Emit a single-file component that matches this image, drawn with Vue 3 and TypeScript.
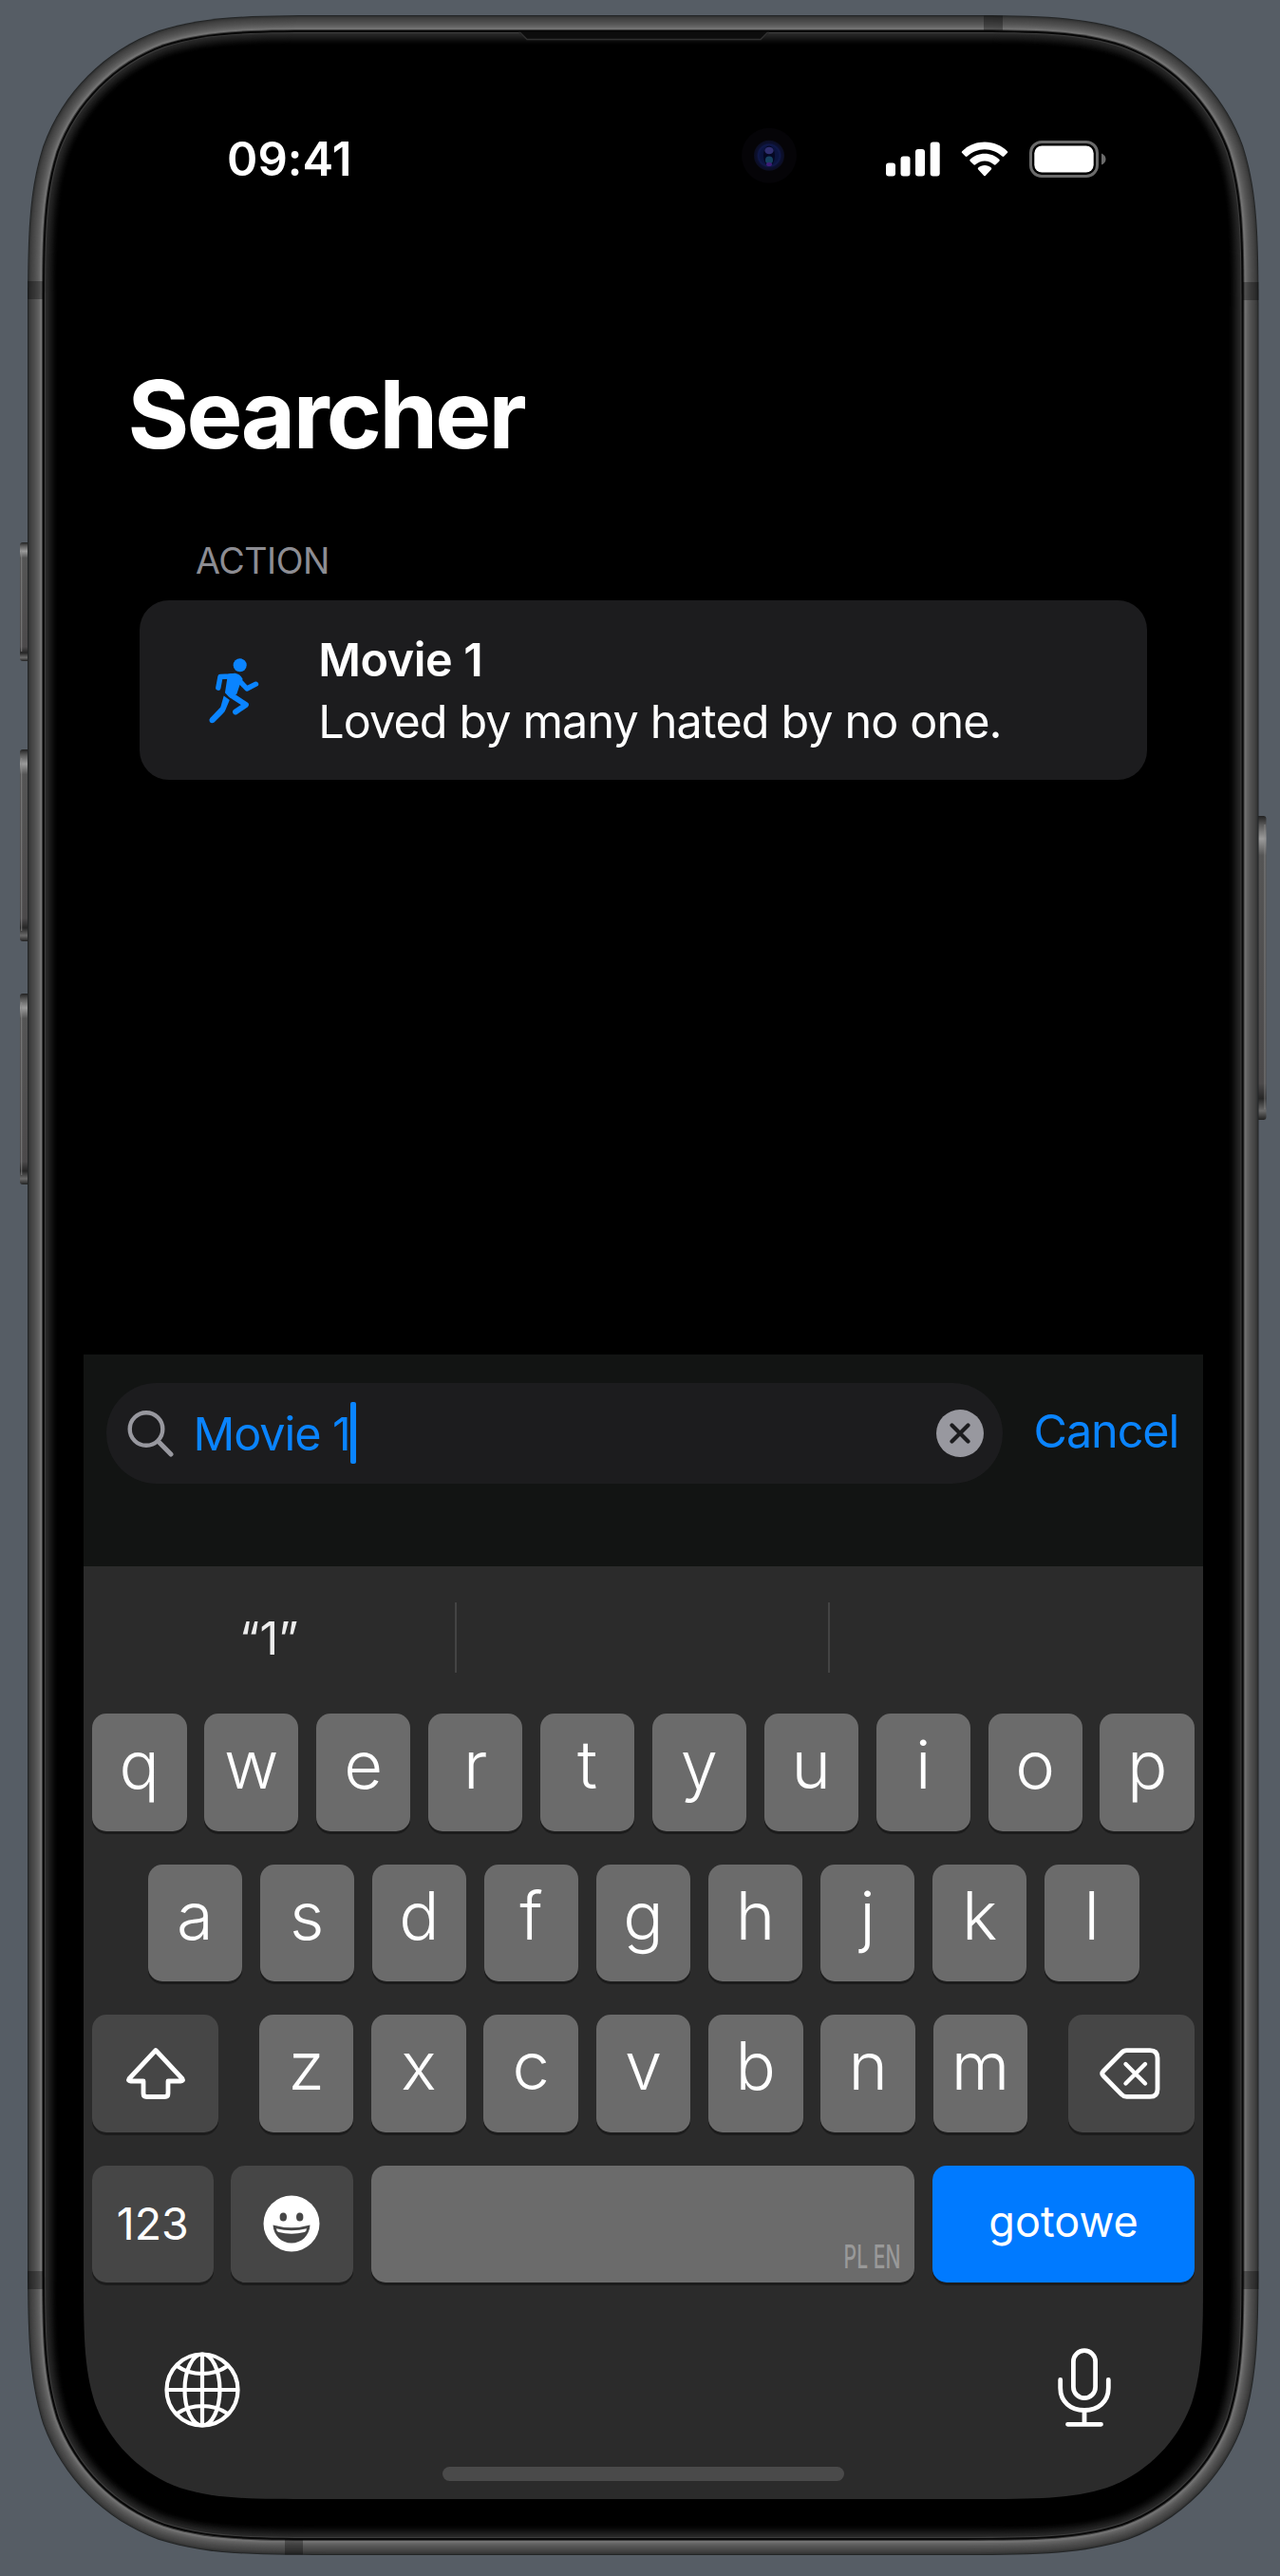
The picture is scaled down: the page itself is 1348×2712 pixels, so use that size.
<script setup lang="ts">
interface Layer {
  d: string
  fill: string
}

// Rounded rectangle with continuous (superelliptic) corners
function squircle(x: number, y: number, w: number, h: number, r: number): string {
  const a = 1.52866 * r
  const b = 1.08849 * r
  const c = 0.86841 * r
  const d = 0.63149 * r
  const e = 0.07491 * r
  const f = 0.37282 * r
  const g = 0.16906 * r
  const R = x + w
  const B = y + h
  return [
    `M${x + a} ${y}`,
    `L${R - a} ${y}`,
    `C${R - b} ${y} ${R - c} ${y} ${R - d} ${y + e}`,
    `C${R - f} ${y + g} ${R - g} ${y + f} ${R - e} ${y + d}`,
    `C${R} ${y + c} ${R} ${y + b} ${R} ${y + a}`,
    `L${R} ${B - a}`,
    `C${R} ${B - b} ${R} ${B - c} ${R - e} ${B - d}`,
    `C${R - g} ${B - f} ${R - f} ${B - g} ${R - d} ${B - e}`,
    `C${R - c} ${B} ${R - b} ${B} ${R - a} ${B}`,
    `L${x + a} ${B}`,
    `C${x + b} ${B} ${x + c} ${B} ${x + d} ${B - e}`,
    `C${x + f} ${B - g} ${x + g} ${B - f} ${x + e} ${B - d}`,
    `C${x} ${B - c} ${x} ${B - b} ${x} ${B - a}`,
    `L${x} ${y + a}`,
    `C${x} ${y + b} ${x} ${y + c} ${x + e} ${y + d}`,
    `C${x + g} ${y + f} ${x + f} ${y + g} ${x + d} ${y + e}`,
    `C${x + c} ${y} ${x + b} ${y} ${x + a} ${y}Z`,
  ].join('')
}

// Metal rim, seam and glass edge, from the outside in, one pixel per step
const rim = [
  '#232526', '#333434', '#3b3b3b', '#404040', '#444444', '#484848', '#4b4b4b', '#4f4f4f',
  '#535353', '#575757', '#5c5c5c', '#616161', '#676767', '#717171', '#737373', '#3a3a3a',
  '#060606', '#0a0a0a', '#3c3c3c', '#292929', '#252525', '#222222', '#1e1e1e', '#1a1a1a',
  '#161616', '#121212', '#0e0e0e', '#0a0a0a', '#070707', '#040404', '#020202', '#000000',
]

const layers: Layer[] = rim.map((fill, i) => ({
  d: squircle(29 + i, 16 + i, 1296.5 - 2 * i, 2674 - 2 * i, 218 - i),
  fill,
}))

const screenClip = { clipPath: `path("${squircle(0, 0, 1179, 2556, 160)}")` }

const row1 = [...'qwertyuiop']
const row2 = [...'asdfghjkl']
const row3 = [...'zxcvbnm']
</script>

<template>
  <div class="page">
    <svg class="device" width="1348" height="2712" viewBox="0 0 1348 2712">
      <defs>
        <linearGradient id="btn" x1="0" y1="0" x2="0" y2="1">
          <stop offset="0" stop-color="#222" />
          <stop offset="0.03" stop-color="#5a5a5a" />
          <stop offset="0.075" stop-color="#9b9b9b" />
          <stop offset="0.13" stop-color="#555" />
          <stop offset="0.88" stop-color="#4c4a4b" />
          <stop offset="0.93" stop-color="#262626" />
          <stop offset="0.97" stop-color="#6a6a6a" />
          <stop offset="1" stop-color="#222" />
        </linearGradient>
        <radialGradient id="lens">
          <stop offset="0" stop-color="#0a1030" />
          <stop offset="0.6" stop-color="#0b1440" />
          <stop offset="0.72" stop-color="#10194a" />
          <stop offset="0.8" stop-color="#0c1030" />
          <stop offset="1" stop-color="#0b0d20" />
        </radialGradient>
      </defs>
      <g fill="url(#btn)">
        <rect x="21" y="571" width="14" height="125" rx="3" />
        <rect x="21" y="789" width="14" height="202" rx="3" />
        <rect x="21" y="1046" width="14" height="201" rx="3" />
        <rect x="1320" y="859" width="13.5" height="320" rx="3" />
      </g>
      <g fill="#8b8b8b" opacity="0.6">
        <rect x="22" y="580" width="1.3" height="106" />
        <rect x="22" y="798" width="1.3" height="182" />
        <rect x="22" y="1055" width="1.3" height="182" />
        <rect x="1331.3" y="868" width="1.3" height="300" />
      </g>
      <path v-for="(layer, i) in layers" :key="i" :d="layer.d" :fill="layer.fill" />
      <g fill="#000" fill-opacity="0.3">
        <rect x="29" y="296" width="17" height="19" />
        <rect x="1309" y="297" width="16.5" height="19" />
        <rect x="1036" y="16.500" width="20" height="15.500" />
        <rect x="300" y="2673" width="19" height="16.500" />
        <rect x="29" y="2391" width="17" height="19" />
        <rect x="1309" y="2391" width="16.5" height="19" />
      </g>
      <path d="M546 34 L555 41.5 H801 L810 34Z" fill="#0d0d0d" />
      <path d="M546 34.5 L548 34.5 L555 41.5 H801 L808 34.5 L810 34.5" fill="none" stroke="#303030" stroke-width="1.4" />
      <circle cx="810" cy="163.7" r="29" fill="#050407" />
      <circle cx="810" cy="163.7" r="16" fill="url(#lens)" />
      <ellipse cx="810" cy="164" rx="6" ry="10.5" fill="#050822" />
      <ellipse cx="810" cy="158.5" rx="4.6" ry="3.8" fill="#302f70" />
      <ellipse cx="810" cy="168.5" rx="4" ry="4" fill="#15405f" />
      <ellipse cx="810" cy="173" rx="3" ry="2" fill="#3f1d78" />
    </svg>

    <main class="screen" :style="screenClip">
      <header class="status">
        <time class="time">09:41</time>
        <div class="indicators">
          <svg width="57" height="37" viewBox="0 0 57 37" fill="#fff">
            <rect x="0" y="22.5" width="10" height="14" rx="3" />
            <rect x="15.5" y="15.5" width="10" height="21" rx="3" />
            <rect x="31" y="8" width="10" height="28.500" rx="3" />
            <rect x="46.700" y="0.500" width="10" height="36" rx="3" />
          </svg>
          <svg width="50" height="37" viewBox="0 0 50 37" fill="#fff">
            <path d="M25 0.500C34.500 0.500 43 4.300 48.800 10.200Q49.700 11.200 48.800 12.100L45.400 15.600Q44.400 16.500 43.400 15.600C38.500 11 32 8.200 25 8.200S11.500 11 6.600 15.600Q5.600 16.500 4.600 15.600L1.200 12.100Q0.300 11.200 1.200 10.200C7 4.300 15.500 0.500 25 0.500Z" />
            <path d="M25 12.700C31 12.700 36.300 15 40.300 18.700Q41.300 19.700 40.300 20.700L36.700 24.200Q35.700 25.100 34.700 24.200C32 21.900 28.700 20.400 25 20.400S18 21.900 15.300 24.200Q14.300 25.100 13.300 24.200L9.700 20.700Q8.700 19.700 9.700 18.700C13.700 15 19 12.700 25 12.700Z" />
            <path d="M25 25C27.600 25 30 25.900 31.800 27.400Q32.800 28.300 31.800 29.400L26 35.800Q25 36.900 24 35.800L18.200 29.400Q17.200 28.300 18.200 27.400C20 25.900 22.400 25 25 25Z" />
          </svg>
          <svg width="81" height="39" viewBox="0 0 81 39">
            <rect x="1.500" y="1.500" width="70" height="36" rx="11.500" fill="none" stroke="#6b6b6b" stroke-width="3" />
            <rect x="5.300" y="5.500" width="62.400" height="28" rx="8" fill="#fff" />
            <path d="M76 13.500Q80.500 15.500 80.500 19.500T76 25.500Z" fill="#6b6b6b" />
          </svg>
        </div>
      </header>

      <h1 class="title">Searcher</h1>

      <section class="results">
        <h2 class="section-label">ACTION</h2>
        <article class="card">
          <svg class="runner" width="60" height="76" viewBox="216 688 60 76" fill="none" stroke="#0a84ff" stroke-linecap="round" stroke-linejoin="round">
            <circle cx="252.700" cy="699.300" r="7" fill="#0a84ff" stroke="none" />
            <path d="M229.800 723.200L232 711.500L242 711Q248 710.500 251.500 715L260 724L269.500 719.200" stroke-width="5.400" />
            <path d="M241 709.500L247.500 708.800Q252 709.500 254.500 714L251.500 720L248.500 729L241.500 731.500L238 728L240.500 712Z" fill="#0a84ff" stroke-width="2" />
            <path d="M241.500 728Q242 730.500 246 732.500L259 741L248 748.500" stroke-width="5.800" />
            <path d="M235.700 731.500L241.800 736L237.500 746.300Q236.800 748.200 235 750L225.500 759.400Q223 761.200 220.900 759Q219.600 756.500 221.500 754.800L232.300 743.600Z" fill="#0a84ff" stroke="none" />
          </svg>
          <div class="card-text">
            <h3>Movie 1</h3>
            <p>Loved by many hated by no one.</p>
          </div>
        </article>
      </section>

      <section class="search-panel">
        <div class="search-field">
          <svg width="50" height="50" viewBox="0 0 50 50" fill="none" stroke="#98989f" stroke-linecap="round">
            <circle cx="20" cy="20.500" r="17.300" stroke-width="4.400" />
            <path d="M32.700 33.500L46 47" stroke-width="5" />
          </svg>
          <span class="query">Movie 1</span><span class="caret"></span>
          <svg class="clear" width="50" height="50" viewBox="0 0 50 50">
            <circle cx="25" cy="25" r="25" fill="#98989f" />
            <path d="M16.500 16.500L33.500 33.500M33.500 16.500L16.500 33.500" stroke="#1c1c1e" stroke-width="4.200" stroke-linecap="round" />
          </svg>
        </div>
        <button class="cancel" type="button">Cancel</button>
      </section>

      <section class="keyboard">
        <div class="suggestions">
          <span class="suggestion">“1”</span>
          <i></i>
          <span class="suggestion"></span>
          <i></i>
          <span class="suggestion last"></span>
        </div>
        <div class="rows">
          <div class="row">
            <button v-for="k in row1" :key="k" class="key" type="button">{{ k }}</button>
          </div>
          <div class="row inset">
            <button v-for="k in row2" :key="k" class="key" type="button">{{ k }}</button>
          </div>
          <div class="row">
            <button class="key dark shift" type="button">
              <svg width="64" height="56" viewBox="0 0 64 56" fill="none" stroke="#fff" stroke-width="4.800" stroke-linejoin="round">
                <path d="M32 3.500L60 33.500Q61.500 36 58.500 36H45V49Q45 52.500 41.500 52.500H22.500Q19 52.500 19 49V36H5.500Q2.500 36 4 33.500Z" />
              </svg>
            </button>
            <button v-for="k in row3" :key="k" class="key" type="button">{{ k }}</button>
            <button class="key dark backspace" type="button">
              <svg width="64" height="54" viewBox="0 0 64 54" fill="none" stroke="#fff" stroke-width="4.800" stroke-linecap="round" stroke-linejoin="round">
                <path d="M28.500 2.600H53Q61 2.600 61 10.600V43.400Q61 51.400 53 51.400H28.500Q25.500 51.400 23 48.800L4 29.500Q1.500 27 4 24.500L23 5.200Q25.500 2.600 28.500 2.600Z" />
                <path d="M27.500 17L48 37.500M48 17L27.500 37.500" stroke-width="4.400" />
              </svg>
            </button>
          </div>
          <div class="row">
            <button class="key dark numbers" type="button">123</button>
            <button class="key dark emoji" type="button">
              <svg width="60" height="60" viewBox="0 0 60 60">
                <circle cx="30" cy="30" r="29.500" fill="#fff" />
                <ellipse cx="21.300" cy="23" rx="3.700" ry="4.500" fill="#464646" />
                <ellipse cx="38.700" cy="23" rx="3.700" ry="4.500" fill="#464646" />
                <path d="M10.500 31.500Q30 37 49.500 31.500C49 42.500 40.500 50.500 30 50.500S11 42.500 10.500 31.500Z" fill="#464646" />
                <path d="M14 35.300Q30 39.300 46 35.300Q46 38 43.500 39Q30 42.300 16.500 39Q14 38 14 35.300Z" fill="#fff" />
              </svg>
            </button>
            <button class="key space" type="button"><span>PL EN</span></button>
            <button class="key done" type="button">gotowe</button>
          </div>
        </div>
        <div class="dock">
          <svg class="globe" width="80" height="80" viewBox="0 0 80 80" fill="none" stroke="#fff" stroke-width="4.200">
            <circle cx="40" cy="40" r="37.500" />
            <ellipse cx="40" cy="40" rx="18.500" ry="37.500" />
            <path d="M40 2.500V77.500M2.500 40H77.500M13.500 15Q25 23 40 23T66.500 15M13.500 65Q25 57 40 57T66.500 65" />
          </svg>
          <svg width="56" height="84" viewBox="0 0 56 84" fill="none" stroke="#fff" stroke-width="4.800" stroke-linecap="round">
            <rect x="16.400" y="2.700" width="23.200" height="50" rx="11.600" />
            <path d="M2.700 33.500V42C2.700 56.500 13.500 65.500 28 65.500S53.300 56.500 53.300 42V33.500" />
            <path d="M28 66V80M10.500 80.300H45.500" />
          </svg>
        </div>
        <div class="home-indicator"></div>
      </section>
    </main>
  </div>
</template>

<style>
body {
  background: #565d65;
}
</style>

<style scoped>
.page {
  position: relative;
  box-sizing: border-box;
  width: 1348px;
  height: 2712px;
  padding: 75px 0 0 88px;
  overflow: hidden;
  background: #565d65;
  font-family: Inter, 'Liberation Sans', sans-serif;
  color: #fff;
}
.device {
  position: absolute;
  inset: 0;
}
.screen {
  position: relative;
  display: flex;
  flex-direction: column;
  width: 1179px;
  height: 2556px;
}
h1, h2, h3, p {
  margin: 0;
}
svg {
  display: block;
  flex: none;
}
.status {
  display: flex;
  justify-content: space-between;
  align-items: center;
  height: 60px;
  margin-top: 62px;
  padding: 0 102.500px 0 151px;
}
.time {
  font-size: 49px;
  font-weight: 600;
  letter-spacing: 0.100px;
}
.indicators {
  display: flex;
  align-items: center;
  gap: 22px;
}
.title {
  margin: 179px 0 0 46.500px;
  font-size: 99px;
  line-height: 120px;
  font-weight: 700;
  letter-spacing: -2.700px;
}
.results {
  margin-top: 71px;
  padding: 0 59px;
}
.section-label {
  padding-left: 59px;
  font-size: 37.700px;
  line-height: 46px;
  font-weight: 400;
  letter-spacing: -0.500px;
  color: #8d8d93;
}
.card {
  display: flex;
  box-sizing: border-box;
  height: 189.500px;
  margin-top: 18.500px;
  padding: 30px 0 0 69px;
  border-radius: 31px;
  background: #1c1c1e;
}
.runner {
  margin-top: 27px;
}
.card-text {
  margin-left: 59.200px;
}
.card-text h3,
.card-text p {
  font-size: 48.500px;
  line-height: 65px;
  white-space: nowrap;
}
.card-text h3 {
  font-weight: 600;
  letter-spacing: -0.400px;
}
.card-text p {
  padding-top: 0.800px;
  letter-spacing: -0.870px;
}
.search-panel {
  display: flex;
  box-sizing: border-box;
  height: 222.700px;
  margin-top: auto;
  padding: 29.500px 0 0 23.500px;
  background: #121413;
}
.search-field {
  display: flex;
  align-items: center;
  box-sizing: border-box;
  width: 944.500px;
  height: 106px;
  padding: 0 20.500px 0 22.500px;
  border-radius: 53px;
  background: #1c1c1e;
}
.query {
  margin: 2px 0 0 19.500px;
  font-size: 48.500px;
  letter-spacing: -1.050px;
  color: #0a84ff;
}
.caret {
  width: 6px;
  height: 65px;
  border-radius: 2px;
  background: #0a84ff;
}
.clear {
  margin-left: auto;
}
button {
  padding: 0;
  border: 0;
  background: none;
  font-family: inherit;
  color: inherit;
}
.cancel {
  height: 101px;
  margin-left: 32.500px;
  font-size: 48.500px;
  letter-spacing: -1.050px;
  color: #0a84ff;
}
.keyboard {
  flex: none;
  box-sizing: border-box;
  height: 982.300px;
  background: #2b2b2b;
}
.suggestions {
  display: flex;
  align-items: center;
  height: 150.600px;
}
.suggestions i {
  width: 2.500px;
  height: 74px;
  background: #444;
}
.suggestion {
  flex: none;
  width: 390.500px;
  text-align: center;
  font-size: 48.500px;
  color: #ececec;
}
.last {
  flex: 1;
}
.rows {
  display: flex;
  flex-direction: column;
  gap: 35px;
  padding: 5.200px 9px 0;
}
.row {
  display: flex;
  justify-content: space-between;
}
.inset {
  padding: 0 58.500px;
}
.key {
  box-sizing: border-box;
  display: flex;
  justify-content: center;
  width: 99.500px;
  height: 123.400px;
  border-radius: 15px;
  background: #6b6b6b;
  box-shadow: 0 3px 0 #1c1c1c;
  font-size: 70.500px;
  line-height: 108px;
  font-weight: 340;
}
.dark {
  align-items: center;
  background: #464646;
}
.shift {
  width: 133px;
  margin-right: 24px;
}
.backspace {
  width: 133px;
  margin-left: 24px;
  padding-right: 3px;
}
.numbers {
  width: 127.700px;
  font-size: 46.500px;
  font-weight: 380;
}
.emoji {
  width: 129px;
  padding-right: 2px;
}
.space {
  align-items: flex-end;
  justify-content: flex-end;
  width: 572px;
}
.space span {
  margin: 0 15px 10px 0;
  font-size: 34px;
  line-height: 34px;
  font-weight: 500;
  color: #999;
  transform: scaleX(0.620);
  transform-origin: right;
}
.done {
  width: 276px;
  background: #007aff;
  font-size: 45px;
  font-weight: 400;
  line-height: 117px;
}
.dock {
  display: flex;
  justify-content: space-between;
  align-items: center;
  margin-top: 69px;
  padding: 0 97px 0 84.500px;
}
.globe {
  margin-top: 4px;
}
.home-indicator {
  width: 423px;
  height: 15px;
  margin: 40.500px auto 0;
  border-radius: 8px;
  background: #4a4a4a;
}
</style>
